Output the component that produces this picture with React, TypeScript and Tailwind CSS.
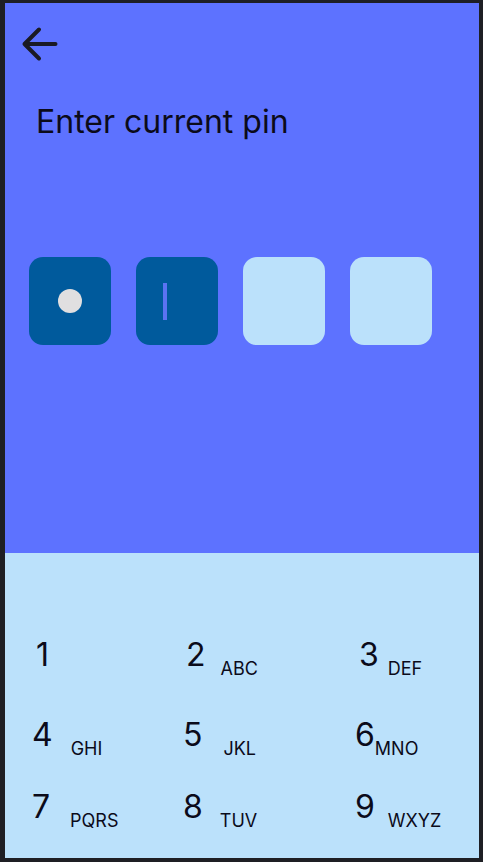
import React from "react";

const keys: { d: string; l: string; ml: string; dm: string }[][] = [
  [
    { d: "1", l: "", ml: "ml-0", dm: "ml-[4px]" },
    { d: "2", l: "ABC", ml: "ml-[15px]", dm: "ml-[3px]" },
    { d: "3", l: "DEF", ml: "ml-[9px]", dm: "ml-[4px]" },
  ],
  [
    { d: "4", l: "GHI", ml: "ml-[18px]", dm: "ml-0" },
    { d: "5", l: "JKL", ml: "ml-[21px]", dm: "ml-0" },
    { d: "6", l: "MNO", ml: "ml-[0px]", dm: "ml-0" },
  ],
  [
    { d: "7", l: "PQRS", ml: "ml-[20px]", dm: "ml-0" },
    { d: "8", l: "TUV", ml: "ml-[17px]", dm: "ml-0" },
    { d: "9", l: "WXYZ", ml: "ml-[13px]", dm: "ml-0" },
  ],
];

const rowMt = ["mt-[86px]", "mt-[48px]", "mt-[40px]"];

export default function App() {
  return (
    <div
      className="w-[483px] h-[862px] bg-[#1e1f24] pl-[5px] pt-[3px] pr-[4px] pb-[4px] flex flex-col"
      style={{ fontFamily: "Inter, Roboto, 'Liberation Sans', sans-serif" }}
    >
      <div className="h-[550px] bg-[#5d72ff] flex flex-col">
        <div className="pl-[15px] pt-[21px]">
          <svg width="40" height="40" viewBox="0 0 40 40" fill="none">
            <path
              d="M35.5 20H4.5M4.5 20L19 5.5M4.5 20L19 34.5"
              stroke="#1a1a24"
              strokeWidth="4"
              strokeLinecap="round"
              strokeLinejoin="round"
            />
          </svg>
        </div>
        <div className="mt-[42px] pl-[31px] text-[32px] leading-none text-[#0b0b1a]">
          Enter current pin
        </div>
        <div className="mt-[119px] pl-[24px] flex gap-[25px]">
          <div className="w-[82px] h-[88px] rounded-[14px] bg-[#005a9c] flex items-center justify-center">
            <div className="w-[24px] h-[24px] rounded-full bg-[#e0dfe0]" />
          </div>
          <div className="w-[82px] h-[88px] rounded-[14px] bg-[#005a9c] flex items-center pl-[27px]">
            <div className="w-[4px] h-[37px] bg-[#5b73f2]" />
          </div>
          <div className="w-[82px] h-[88px] rounded-[14px] bg-[#bbe1fb]" />
          <div className="w-[82px] h-[88px] rounded-[14px] bg-[#bbe1fb]" />
        </div>
      </div>
      <div className="flex-1 bg-[#bbe1fb] flex flex-col">
        {keys.map((row, ri) => (
          <div
            key={ri}
            className={`${rowMt[ri]} grid grid-cols-[151px_172px_1fr] pl-[27px] text-[#0b0b1a]`}
          >
            {row.map((k) => (
              <div key={k.d} className={`${k.dm} flex items-baseline`}>
                <span className="text-[32px] leading-none">{k.d}</span>
                {k.l && (
                  <span className={`${k.ml} text-[18px] leading-none translate-y-[9px]`}>
                    {k.l}
                  </span>
                )}
              </div>
            ))}
          </div>
        ))}
      </div>
    </div>
  );
}
